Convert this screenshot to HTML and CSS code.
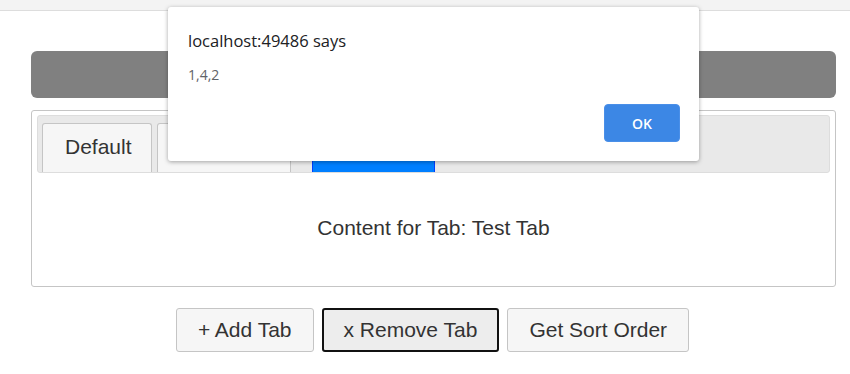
FILE: index.html
```html
<!DOCTYPE html>
<html lang="en">
<head>
  <meta charset="UTF-8">
  <title>Sortable Tabs</title>
  <meta name="viewport" content="width=device-width, initial-scale=1.0">
  <link rel="stylesheet" href="styles.css">
</head>
<body>
  <div class="topbar"></div>

  <div class="page">
    <div class="banner"></div>

    <div class="tabs">
      <ul class="tab-nav">
        <li class="tab">Default</li>
        <li class="tab tab-wide"></li>
        <li class="tab tab-active"></li>
      </ul>
      <div class="tab-panel">Content for Tab: Test Tab</div>
    </div>

    <div class="actions">
      <button type="button">+ Add Tab</button>
      <button type="button" class="focused">x Remove Tab</button>
      <button type="button">Get Sort Order</button>
    </div>
  </div>

  <div class="alert">
    <div class="alert-title">localhost:49486 says</div>
    <div class="alert-msg">1,4,2</div>
    <div class="alert-foot">
      <button type="button" class="alert-ok">OK</button>
    </div>
  </div>
</body>
</html>
```

FILE: styles.css
```css
body {
  font-family: "Liberation Sans", Arial, sans-serif;
  background: #ffffff;
  margin: 0;
  padding: 0;
  color: #333;
}
.topbar {
  height: 10px;
  background: #f3f3f3;
  border-bottom: 1px solid #dddddd;
}
.page {
  padding: 40px 14px 0 31px;
}
.banner {
  height: 47px;
  background: #808080;
  border-radius: 6px;
  margin-bottom: 12px;
}
.tabs {
  border: 1px solid #c5c5c5;
  border-radius: 3px;
  padding: 4px 5px;
  box-sizing: border-box;
  height: 177px;
}
.tab-nav {
  list-style: none;
  margin: 0;
  padding: 7px 0 0 4px;
  height: 49px;
  background: #e9e9e9;
  border: 1px solid #dddddd;
  border-radius: 3px;
  display: flex;
  align-items: flex-end;
}
.tab {
  height: 49px;
  box-sizing: border-box;
  border: 1px solid #c5c5c5;
  border-bottom: none;
  border-radius: 3px 3px 0 0;
  background: #f6f6f6;
  font-size: 21px;
  padding: 11px 22px 0;
  margin-right: 5px;
  width: 110px;
}
.tab-wide {
  width: 134px;
}
.tab-active {
  width: 123px;
  margin-left: 16px;
  background: #007fff;
  border-color: #003eff;
}
.tab-panel {
  text-align: center;
  font-size: 21px;
  padding-top: 43px;
}
.actions {
  display: flex;
  justify-content: center;
  gap: 8px;
  margin-top: 21px;
  padding-right: 2px;
}
.actions button {
  font-family: "Liberation Sans", Arial, sans-serif;
  font-size: 21px;
  color: #333;
  height: 44px;
  padding: 0 21px;
  background: #f6f6f6;
  border: 1px solid #c5c5c5;
  border-radius: 3px;
}
.actions .focused {
  background: #ededed;
  border: 2px solid #111;
  padding: 0 20px;
}
.alert {
  position: absolute;
  top: 7px;
  left: 168px;
  width: 531px;
  height: 154px;
  box-sizing: border-box;
  background: #fff;
  border-radius: 3px;
  box-shadow: 0 1px 4px rgba(0, 0, 0, 0.35);
  padding: 22px 19px 0 20px;
  font-family: "Open Sans", "Noto Sans", sans-serif;
}
.alert-title {
  font-size: 16.5px;
  color: #202124;
}
.alert-msg {
  font-size: 14px;
  color: #5f6368;
  margin-top: 13px;
}
.alert-foot {
  display: flex;
  justify-content: flex-end;
  margin-top: 20px;
}
.alert-ok {
  width: 76px;
  height: 38px;
  background: #3c87e5;
  border: 1px solid #4a8fe8;
  border-radius: 4px;
  color: #fff;
  font-family: "Open Sans", "Noto Sans", sans-serif;
  font-weight: 600;
  font-size: 14px;
}
```
